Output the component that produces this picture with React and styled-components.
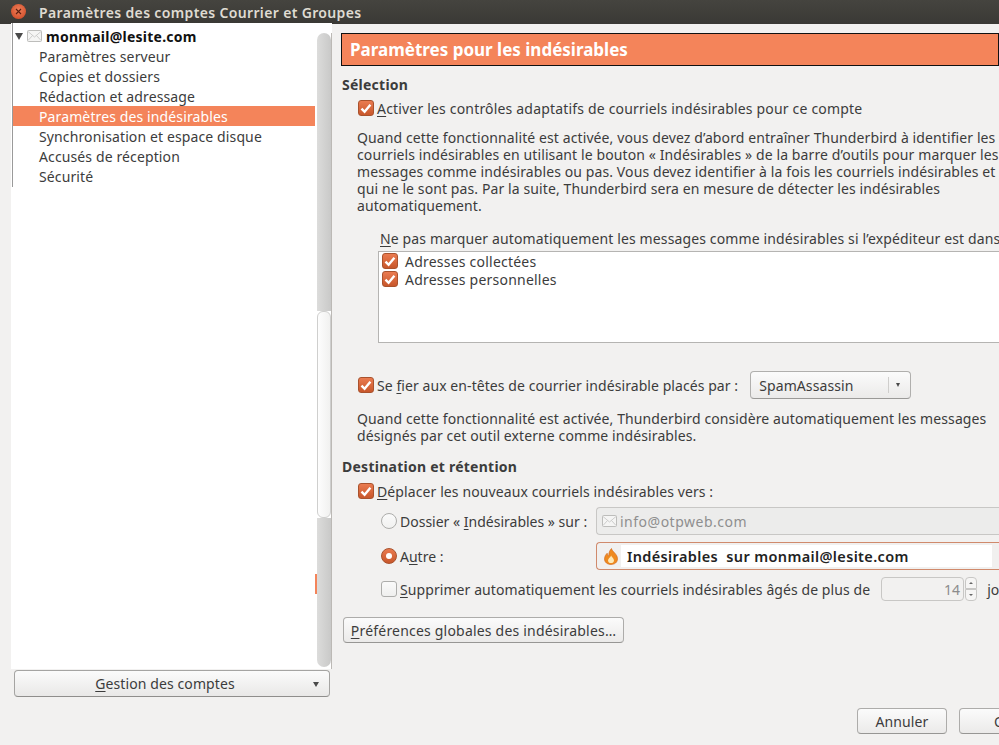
import React from 'react';
import styled, { createGlobalStyle } from 'styled-components';

const ORANGE = '#f4845a';
const TEXT = '#3c3c3c';

const GlobalStyle = createGlobalStyle`
  html, body {
    margin: 0;
    padding: 0;
    background: #f2f1f0;
  }
  body {
    font-family: 'Noto Sans', 'Open Sans', sans-serif;
    font-size: 14px;
    letter-spacing: 0.1px;
    color: ${TEXT};
  }
`;

const Window = styled.div`
  width: 999px;
  height: 745px;
  overflow: hidden;
  display: flex;
  flex-direction: column;
  background: #f2f1f0;
`;

const TitleBar = styled.header`
  height: 24px;
  flex: none;
  display: flex;
  align-items: center;
  padding-left: 11px;
  gap: 13px;
  background: linear-gradient(#45443f, #3a3935);
  color: #dfdbd2;
  font-size: 14px;
  font-weight: 600;
  letter-spacing: 0.35px;
`;

const CloseButton = styled.span`
  width: 15px;
  height: 15px;
  margin-top: -1px;
  border-radius: 50%;
  background: radial-gradient(circle at 50% 40%, #f0805a, #c9421f);
  display: flex;
  align-items: center;
  justify-content: center;
  svg { display: block; }
`;

const Body = styled.div`
  flex: 1;
  display: flex;
  min-height: 0;
`;

const Sidebar = styled.aside`
  width: 341px;
  flex: none;
  display: flex;
  flex-direction: column;
`;

const TreeFrame = styled.div`
  margin: -1px 0 0 11px;
  width: 321px;
  height: 646px;
  display: flex;
  flex: none;
  background: #fff;
`;

const Tree = styled.ul`
  list-style: none;
  margin: 0;
  padding: 3px 0 0 2px;
  width: 304px;
  height: 100%;
  flex: none;
  box-sizing: border-box;
  position: relative;
`;

const TreeEdge = styled.span`
  position: absolute;
  left: 1px;
  top: 0;
  width: 1px;
  height: 164px;
  background: #9a9a9a;
`;

const DropMark = styled.span`
  position: absolute;
  right: -2px;
  top: 551px;
  width: 2px;
  height: 20px;
  background: ${ORANGE};
`;

const AccountRow = styled.li`
  height: 20px;
  display: flex;
  align-items: center;
  padding-left: 2px;
  gap: 4px;
  font-weight: 700;
  font-size: 14px;
  letter-spacing: 0.25px;
  color: #111;
`;

const TreeRow = styled.li`
  height: 20px;
  line-height: 22px;
  padding-left: 26px;
  letter-spacing: 0.12px;
  background: ${p => (p.$selected ? ORANGE : 'transparent')};
  color: ${p => (p.$selected ? '#fff' : TEXT)};
`;

const ScrollTrack = styled.div`
  width: 17px;
  flex: none;
  margin-top: 10px;
  height: 636px;
  box-sizing: border-box;
  padding-left: 2px;
  border-right: 1px solid #bcb9b5;
  display: flex;
  flex-direction: column;
`;

const ScrollTop = styled.div`
  flex: none;
  height: 278px;
  border-radius: 7px 7px 0 0;
  background: linear-gradient(90deg, #dcdcdb, #c9c9c8);
`;

const ScrollThumb = styled.div`
  flex: none;
  height: 207px;
  box-sizing: border-box;
  border: 1px solid #cfcfce;
  background: linear-gradient(90deg, #fdfdfd, #f1f1f0);
  border-radius: 6px;
`;

const ScrollBottom = styled.div`
  flex: 1;
  border-radius: 0 0 7px 7px;
  background: linear-gradient(90deg, #dcdcdb, #c9c9c8);
  margin-bottom: 2px;
`;

const FootRow = styled.div`
  padding: 1px 0 0 14px;
`;

const MenuButton = styled.button`
  width: 316px;
  height: 27px;
  box-sizing: border-box;
  border: 1px solid #a5a4a2;
  border-bottom-color: #8f8e8c;
  border-radius: 4px;
  background: linear-gradient(#fbfbfb, #e9e8e7);
  color: ${TEXT};
  font: inherit;
  letter-spacing: inherit;
  padding: 0 14px 0 0;
  display: flex;
  align-items: center;
  justify-content: center;
  position: relative;
`;

const Caret = styled.span`
  width: 0;
  height: 0;
  border-left: 4px solid transparent;
  border-right: 4px solid transparent;
  border-top: 7px solid #4a4a4a;
  flex: none;
`;

const MenuCaret = styled(Caret)`
  position: absolute;
  right: 10px;
  top: 11px;
  border-left-width: 3.5px;
  border-right-width: 3.5px;
  border-top-width: 5px;
`;

const U = styled.span`
  text-decoration: underline;
  text-underline-offset: 2px;
  text-decoration-thickness: 1px;
`;

const Main = styled.main`
  flex: 1;
  min-width: 0;
  padding-top: 9px;
  display: flex;
  flex-direction: column;
`;

const Banner = styled.h1`
  margin: 0;
  height: 33px;
  width: 658px;
  box-sizing: border-box;
  border: 1px solid #111;
  background: ${ORANGE};
  color: #fff;
  font-size: 17px;
  font-weight: 700;
  letter-spacing: 0;
  line-height: 31px;
  padding-left: 8px;
  white-space: nowrap;
`;

const SectionTitle = styled.h2`
  margin: ${p => p.$top}px 0 0 1px;
  height: 20px;
  line-height: 20px;
  font-size: 14px;
  font-weight: 700;
  letter-spacing: 0.25px;
`;

const Line = styled.div`
  display: flex;
  align-items: center;
  height: ${p => p.$h || 20}px;
  margin-top: ${p => p.$top || 0}px;
  padding-left: ${p => p.$indent || 0}px;
  white-space: nowrap;
  flex: none;
`;

const Paragraph = styled.p`
  margin: ${p => p.$top}px 0 0 16px;
  line-height: 17px;
  white-space: nowrap;
`;

const Label = styled.span`
  margin-left: ${p => p.$gap ?? 3}px;
  letter-spacing: ${p => p.$ls ?? 0.1}px;
`;

const CheckBox = styled.span`
  width: 16px;
  height: 16px;
  flex: none;
  box-sizing: border-box;
  border-radius: 3px;
  display: flex;
  align-items: center;
  justify-content: center;
  background: ${p => (p.$on ? 'linear-gradient(#ea7b50, #c8572b)' : 'linear-gradient(#fafafa, #efefee)')};
  border: 1px solid ${p => (p.$on ? '#a9522d' : '#adadab')};
  svg { display: block; }
`;

const Radio = styled.span`
  width: 16px;
  height: 16px;
  flex: none;
  box-sizing: border-box;
  border-radius: 50%;
  display: flex;
  align-items: center;
  justify-content: center;
  background: ${p => (p.$on ? 'linear-gradient(#ea7b50, #c8572b)' : 'linear-gradient(#fafafa, #f1f1f0)')};
  border: 1px solid ${p => (p.$on ? '#a9522d' : '#adadab')};
  &::after {
    content: '';
    display: ${p => (p.$on ? 'block' : 'none')};
    width: 6px;
    height: 6px;
    border-radius: 50%;
    background: #fff;
  }
`;

const ListBox = styled.div`
  margin: 3px 0 0 37px;
  width: 640px;
  height: 92px;
  flex: none;
  box-sizing: border-box;
  border: 1px solid #b5b4b2;
  border-right: 0;
  background: #fff;
`;

const ListRow = styled.div`
  display: flex;
  align-items: center;
  height: 18px;
  padding-left: 3px;
  gap: 7px;
  letter-spacing: 0.22px;
`;

const DropDown = styled.div`
  margin-left: 12px;
  width: 161px;
  height: 28px;
  box-sizing: border-box;
  border: 1px solid #b0afad;
  border-bottom-color: #9a9997;
  border-radius: 4px;
  background: linear-gradient(#fbfbfb, #ebeae9);
  display: flex;
  align-items: center;
  padding-left: 8px;
  position: relative;
`;

const DropDivider = styled.span`
  position: absolute;
  right: 21px;
  top: 5px;
  bottom: 5px;
  width: 1px;
  background: #cfcecc;
`;

const DropCaret = styled(Caret)`
  position: absolute;
  right: 10px;
  top: 11px;
  border-left-width: 2.5px;
  border-right-width: 2.5px;
  border-top-width: 4px;
`;

const FolderLabel = styled.span`
  width: 196px;
  margin-left: 3px;
  flex: none;
  letter-spacing: 0;
`;

const FolderField = styled.div`
  width: 420px;
  height: 28px;
  box-sizing: border-box;
  flex: none;
  display: flex;
  align-items: center;
  border: 1px solid ${p => (p.$active ? '#d08a6c' : '#c8c7c5')};
  border-right: 0;
  border-radius: 4px 0 0 4px;
  background: ${p => (p.$active ? '#f1f0ef' : '#ececeb')};
  padding-left: ${p => (p.$active ? 7 : 5)}px;
  color: ${p => (p.$active ? '#222' : '#8f8f8f')};
  letter-spacing: ${p => (p.$active ? 0.1 : 0.5)}px;
  gap: 3px;
`;

const FolderValue = styled.span`
  background: #fff;
  padding-left: 6px;
  width: 371px;
  box-sizing: border-box;
  height: 22px;
  line-height: 22px;
  font-size: 14.5px;
  font-weight: 600;
  letter-spacing: 0.36px;
  white-space: pre;
`;

const SpinField = styled.div`
  width: 83px;
  height: 24px;
  box-sizing: border-box;
  border: 1px solid #c8c7c5;
  border-radius: 4px;
  background: #f2f1f0;
  color: #8c8c8c;
  text-align: right;
  line-height: 23px;
  padding-right: 3px;
  margin-left: 11px;
  flex: none;
`;

const SpinButtons = styled.div`
  width: 12px;
  height: 24px;
  margin-left: 1px;
  display: flex;
  flex-direction: column;
  flex: none;
`;

const SpinStep = styled.span`
  flex: 1;
  box-sizing: border-box;
  border: 1px solid #c8c7c5;
  border-radius: ${p => (p.$down ? '0 0 4px 4px' : '4px 4px 0 0')};
  background: #f6f5f4;
  display: flex;
  align-items: center;
  justify-content: center;
  &::after {
    content: '';
    border-left: 2px solid transparent;
    border-right: 2px solid transparent;
    ${p => (p.$down ? 'border-top: 2px solid #666;' : 'border-bottom: 2px solid #666;')}
  }
`;

const PlainButton = styled.button`
  height: 26px;
  width: ${p => p.$w}px;
  flex: none;
  box-sizing: border-box;
  border: 1px solid #adacaa;
  border-bottom-color: #979694;
  border-radius: 4px;
  background: linear-gradient(#fbfbfb, #ebeae9);
  color: ${TEXT};
  font: inherit;
  letter-spacing: ${p => p.$ls ?? 0.1}px;
  padding: 0;
  white-space: nowrap;
`;

const Actions = styled.div`
  margin-top: 65px;
  padding-left: 516px;
  display: flex;
  gap: 12px;
`;

const Check = () => (
  <svg width="12" height="11" viewBox="0 0 12 11">
    <path d="M1.5 5.6 4.6 8.8 10.4 1.8" fill="none" stroke="#fff" strokeWidth="2.4" />
  </svg>
);

const Box = ({ on }) => <CheckBox $on={on}>{on && <Check />}</CheckBox>;

const Envelope = () => (
  <svg width="15" height="12" viewBox="0 0 15 12" style={{ flex: 'none', display: 'block' }}>
    <rect x="0.5" y="0.5" width="14" height="11" rx="1" fill="#f5f5f4" stroke="#bdbdbb" />
    <path d="M1 1.5 7.5 7 14 1.5M1 10.5 5.5 5.5M14 10.5 9.5 5.5" fill="none" stroke="#c2c2c0" strokeWidth="0.8" />
  </svg>
);

const Flame = () => (
  <svg width="14" height="17" viewBox="0 0 14 17" style={{ flex: 'none', display: 'block' }}>
    <path d="M7.5 0.5C8 3.5 13.5 6 13.5 10.8 13.5 14.4 10.6 16.5 7 16.5 3.4 16.5 0.5 14.3 0.5 11 0.5 8.2 2 6.4 3.2 5.2 3.4 6.8 4 7.6 4.8 8 4.6 5 5.6 2.4 7.5 0.5Z" fill="#ef8a1f" stroke="#d0651a" strokeWidth="0.6" />
    <path d="M7.2 7.5C7.6 9.2 10 10.2 10 12.4 10 14 8.6 15 7 15 5.4 15 4 14 4 12.4 4 10.6 6.2 9.6 7.2 7.5Z" fill="#fde9b8" />
  </svg>
);

const treeItems = [
  'Paramètres serveur',
  'Copies et dossiers',
  'Rédaction et adressage',
  'Paramètres des indésirables',
  'Synchronisation et espace disque',
  'Accusés de réception',
  'Sécurité',
];

const App = () => (
  <Window>
    <GlobalStyle />
    <TitleBar>
      <CloseButton>
        <svg width="7" height="7" viewBox="0 0 7 7">
          <path d="M1 1 6 6M6 1 1 6" stroke="#5a1f10" strokeWidth="1.1" />
        </svg>
      </CloseButton>
      Paramètres des comptes Courrier et Groupes
    </TitleBar>
    <Body>
      <Sidebar>
        <TreeFrame>
          <Tree>
            <TreeEdge />
            <DropMark />
            <AccountRow>
              <Caret />
              <Envelope />
              monmail@lesite.com
            </AccountRow>
            {treeItems.map(item => (
              <TreeRow key={item} $selected={item === 'Paramètres des indésirables'}>
                {item}
              </TreeRow>
            ))}
          </Tree>
          <ScrollTrack>
            <ScrollTop />
            <ScrollThumb />
            <ScrollBottom />
          </ScrollTrack>
        </TreeFrame>
        <FootRow>
          <MenuButton>
            <span><U>G</U>estion des comptes</span>
            <MenuCaret />
          </MenuButton>
        </FootRow>
      </Sidebar>
      <Main>
        <Banner>Paramètres pour les indésirables</Banner>
        <SectionTitle $top={9}>Sélection</SectionTitle>
        <Line $indent={17} $top={3}>
          <Box on />
          <Label $ls={0.18}><U>A</U>ctiver les contrôles adaptatifs de courriels indésirables pour ce compte</Label>
        </Line>
        <Paragraph $top={11}>
          Quand cette fonctionnalité est activée, vous devez d’abord entraîner Thunderbird à identifier les<br />
          courriels indésirables en utilisant le bouton « Indésirables » de la barre d’outils pour marquer les<br />
          messages comme indésirables ou pas. Vous devez identifier à la fois les courriels indésirables et<br />
          qui ne le sont pas. Par la suite, Thunderbird sera en mesure de détecter les indésirables<br />
          automatiquement.
        </Paragraph>
        <Line $indent={39} $top={14}>
          <Label $gap={0} $ls={0.13}><U>N</U>e pas marquer automatiquement les messages comme indésirables si l’expéditeur est dans</Label>
        </Line>
        <ListBox>
          <ListRow><Box on />Adresses collectées</ListRow>
          <ListRow><Box on />Adresses personnelles</ListRow>
        </ListBox>
        <Line $indent={17} $top={28} $h={28}>
          <Box on />
          <Label $ls={0.07}>Se <U>f</U>ier aux en-têtes de courrier indésirable placés par :</Label>
          <DropDown>
            SpamAssassin
            <DropDivider />
            <DropCaret />
          </DropDown>
        </Line>
        <Paragraph $top={11}>
          Quand cette fonctionnalité est activée, Thunderbird considère automatiquement les messages<br />
          désignés par cet outil externe comme indésirables.
        </Paragraph>
        <SectionTitle $top={13}>Destination et rétention</SectionTitle>
        <Line $indent={17} $top={4}>
          <Box on />
          <Label><U>D</U>éplacer les nouveaux courriels indésirables vers :</Label>
        </Line>
        <Line $indent={40} $top={6} $h={28}>
          <Radio />
          <FolderLabel>Dossier « <U>I</U>ndésirables » sur :</FolderLabel>
          <FolderField>
            <Envelope />
            info@otpweb.com
          </FolderField>
        </Line>
        <Line $indent={40} $top={7} $h={28}>
          <Radio $on />
          <FolderLabel>A<U>u</U>tre :</FolderLabel>
          <FolderField $active>
            <Flame />
            <FolderValue>Indésirables  sur monmail@lesite.com</FolderValue>
          </FolderField>
        </Line>
        <Line $indent={40} $top={7} $h={24}>
          <Box />
          <Label $ls={0.08}><U>S</U>upprimer automatiquement les courriels indésirables âgés de plus de</Label>
          <SpinField>14</SpinField>
          <SpinButtons>
            <SpinStep />
            <SpinStep $down />
          </SpinButtons>
          <Label $gap={10}>jours</Label>
        </Line>
        <Line $indent={2} $top={16} $h={26}>
          <PlainButton $w={281} $ls={0.2}><U>P</U>références globales des indésirables…</PlainButton>
        </Line>
        <Actions>
          <PlainButton $w={90}>Annuler</PlainButton>
          <PlainButton $w={90}>OK</PlainButton>
        </Actions>
      </Main>
    </Body>
  </Window>
);

export default App;
